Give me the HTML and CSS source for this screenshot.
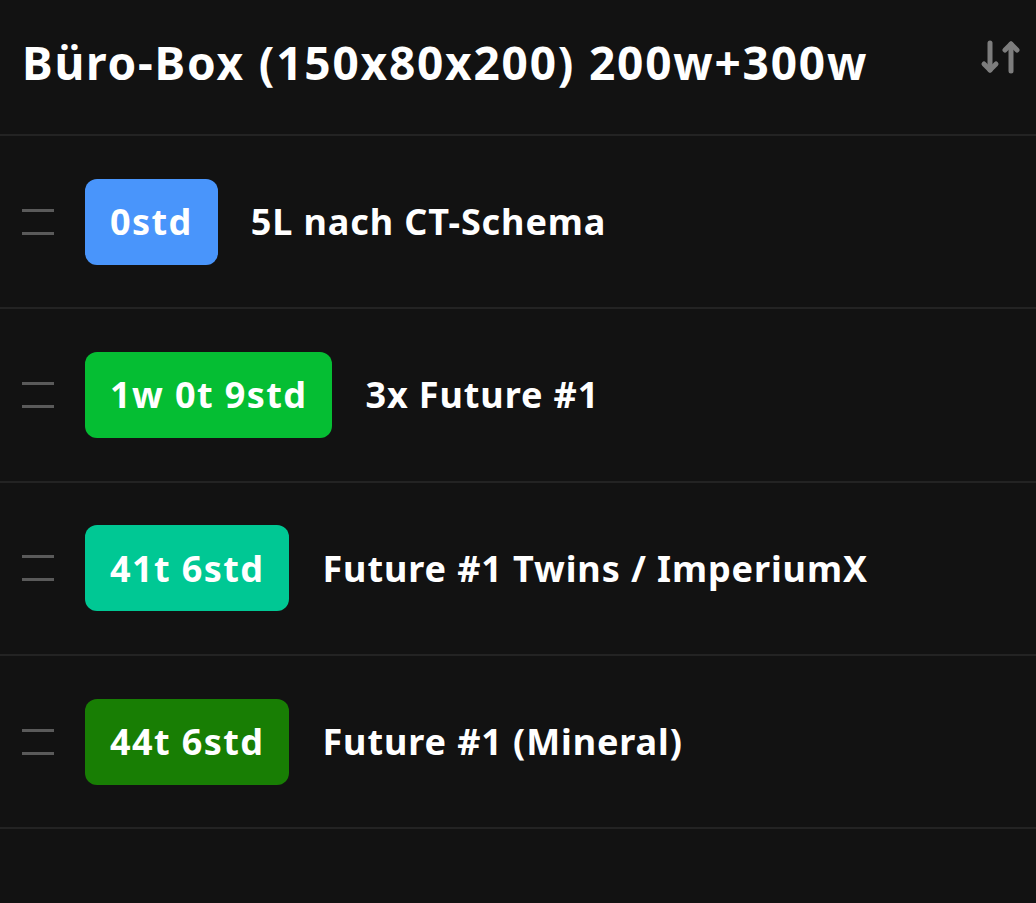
FILE: index.html
```html
<!DOCTYPE html>
<html lang="de">
<head>
<meta charset="utf-8">
<title>Büro-Box</title>
<link rel="stylesheet" href="styles.css">
</head>
<body>
<header class="header">
  <h1 class="title">Büro-Box (150x80x200) 200w+300w</h1>
  <button class="sort" aria-label="Sortieren">
    <svg width="44" height="40" viewBox="0 0 44 40" fill="none" stroke="#7d7d7d" stroke-width="5" stroke-linecap="round" stroke-linejoin="round">
      <path d="M11 5 V32"/>
      <path d="M5 26 L11 32 L17 26"/>
      <path d="M32 6 V33"/>
      <path d="M26 12 L32 6 L38 12"/>
    </svg>
  </button>
</header>
<ul class="list">
  <li class="row">
    <span class="handle"></span>
    <span class="badge badge-blue">0std</span>
    <span class="label">5L nach CT-Schema</span>
  </li>
  <li class="row">
    <span class="handle"></span>
    <span class="badge badge-green">1w 0t 9std</span>
    <span class="label">3x Future #1</span>
  </li>
  <li class="row">
    <span class="handle"></span>
    <span class="badge badge-teal">41t 6std</span>
    <span class="label">Future #1 Twins / ImperiumX</span>
  </li>
  <li class="row">
    <span class="handle"></span>
    <span class="badge badge-dark">44t 6std</span>
    <span class="label">Future #1 (Mineral)</span>
  </li>
</ul>
</body>
</html>
```
FILE: styles.css
```css
* { box-sizing: border-box; }
html, body {
  margin: 0;
  padding: 0;
  background: #121212;
  color: #ffffff;
  font-family: "Noto Sans", "Open Sans", sans-serif;
  height: 100%;
}
.header {
  display: flex;
  align-items: center;
  justify-content: space-between;
  height: 136px;
  padding: 0 13px 10px 22px;
  border-bottom: 2px solid #232323;
}
.title {
  margin: 0;
  font-size: 46px;
  font-weight: 700;
  letter-spacing: 1.8px;
}
.sort {
  background: none;
  border: 0;
  padding: 0;
  margin-top: -8px;
  display: flex;
}
.list {
  list-style: none;
  margin: 0;
  padding: 0;
}
.row {
  display: flex;
  align-items: center;
  height: 173.3px;
  padding-left: 22px;
  border-bottom: 2px solid #232323;
}
.handle {
  width: 32px;
  height: 26px;
  border-top: 3px solid #5a5a5a;
  border-bottom: 3px solid #5a5a5a;
  margin-right: 31px;
}
.badge {
  display: flex;
  align-items: center;
  height: 86px;
  padding: 0 25px;
  border-radius: 12px;
  font-size: 36px;
  font-weight: 700;
  letter-spacing: 1.4px;
  margin-right: 33px;
}
.badge-blue { background: #4995fb; }
.badge-green { background: #05be33; }
.badge-teal { background: #00c894; }
.badge-dark { background: #187e04; }
.label {
  font-size: 36px;
  font-weight: 700;
  letter-spacing: 0.9px;
}
```
